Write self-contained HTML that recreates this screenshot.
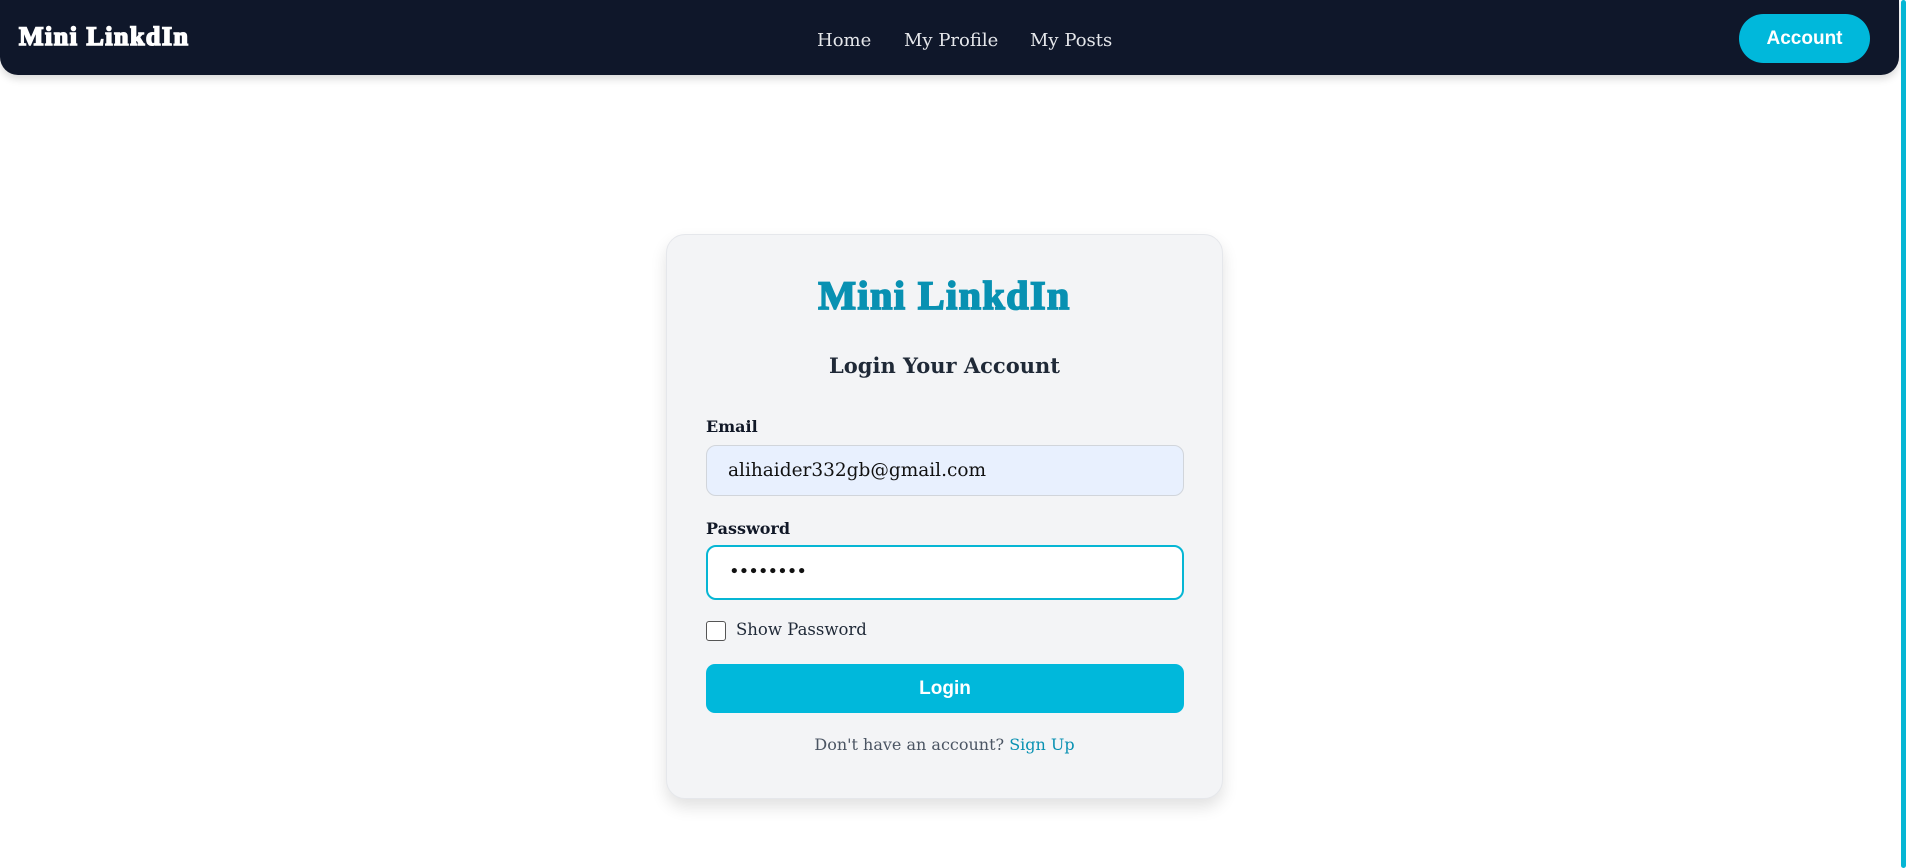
<!DOCTYPE html>
<html><head><meta charset="utf-8"><style>
*{box-sizing:border-box;margin:0;padding:0}
html,body{width:1910px;height:868px;overflow:hidden;background:#fff;font-family:"DejaVu Serif","Liberation Serif",serif}
.nav{position:absolute;left:0;top:0;width:1899px;height:75px;background:#0f172a;border-radius:0 0 18px 18px;box-shadow:0 4px 8px rgba(0,0,0,.15)}
.logo{position:absolute;left:19px;top:22px;font-family:"Liberation Serif",serif;font-weight:bold;font-size:26px;color:#fff;-webkit-text-stroke:1.6px #fff;letter-spacing:1.5px}
.links{position:absolute;top:30px;left:817px;font-size:18px;color:#e5e7eb;white-space:nowrap}
.links span{position:absolute}
.acct{position:absolute;left:1739px;top:14px;width:131px;height:49px;border-radius:25px;background:#00b8db;color:#fff;font-family:"Liberation Sans",sans-serif;font-weight:bold;font-size:19px;text-align:center;line-height:49px}
.sb{position:absolute;left:1901px;top:0;width:5px;height:868px;background:#06b6d4;border-radius:3px}
.card{position:absolute;left:666px;top:234px;width:557px;height:565px;background:#f3f4f6;border:1px solid #e5e7eb;border-radius:19px;box-shadow:0 8px 16px rgba(0,0,0,.12)}
.t1{position:absolute;left:666px;width:557px;top:272px;text-align:center;font-family:"Liberation Serif",serif;font-weight:bold;font-size:40px;color:#0891b2;-webkit-text-stroke:1.8px #0891b2;letter-spacing:1.5px}
.t2{position:absolute;left:666px;width:557px;top:353px;text-align:center;font-weight:bold;font-size:21px;color:#1f2937}
.lbl{position:absolute;left:706px;font-weight:bold;font-size:16px;color:#111827}
.inp{position:absolute;left:706px;width:478px;border-radius:10px;font-size:18.5px;padding-left:21px;color:#111}
.cb{position:absolute;left:706px;top:621px;width:20px;height:20px;border:1.5px solid #555;border-radius:3px;background:#fff}
.btn{position:absolute;left:706px;top:664px;width:478px;height:49px;border-radius:9px;background:#00b8db;color:#fff;font-family:"Liberation Sans",sans-serif;font-weight:bold;font-size:19px;text-align:center;line-height:49px}
.ft{position:absolute;left:666px;width:557px;top:735px;text-align:center;font-size:16px;color:#4b5563}
</style></head><body>
<div class="nav">
<div class="logo">Mini LinkdIn</div>
<div class="links"><span style="left:0">Home</span><span style="left:87px">My Profile</span><span style="left:213px">My Posts</span></div>
<div class="acct">Account</div>
</div>
<div class="sb"></div>
<div class="card"></div>
<div class="t1">Mini LinkdIn</div>
<div class="t2">Login Your Account</div>
<div class="lbl" style="top:417px">Email</div>
<div class="inp" style="top:445px;height:51px;background:#e8f0fe;border:1px solid #d1d5db;line-height:49px">alihaider332gb@gmail.com</div>
<div class="lbl" style="top:519px">Password</div>
<div class="inp" style="top:545px;height:55px;background:#fff;border:2.5px solid #06b6d4;line-height:50px;font-size:18px;letter-spacing:-1px">••••••••</div>
<div class="cb"></div>
<div style="position:absolute;left:736px;top:620px;font-size:16.5px;color:#1f2937">Show Password</div>
<div class="btn">Login</div>
<div class="ft">Don't have an account? <span style="color:#0891b2">Sign Up</span></div>
</body></html>
